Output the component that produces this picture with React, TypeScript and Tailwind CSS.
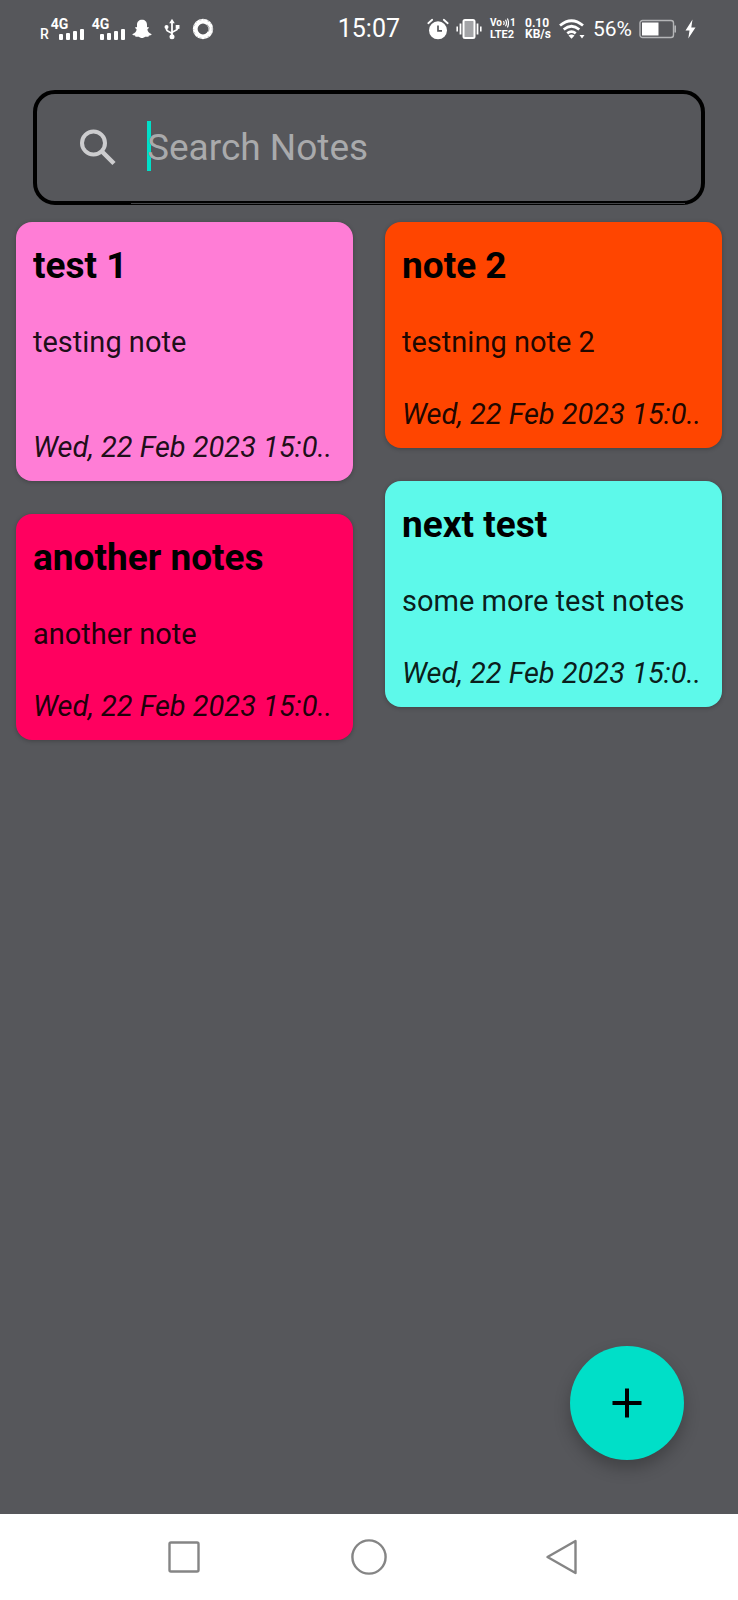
import React, { useState } from "react";

type Note = { title: string; body: string; date: string; color: string; bodyHeight: string };

const leftNotes: Note[] = [
  { title: "test 1", body: "testing note", date: "Wed, 22 Feb 2023 15:0..", color: "bg-[#ff7dd6]", bodyHeight: "h-[105px]" },
  { title: "another notes", body: "another note", date: "Wed, 22 Feb 2023 15:0..", color: "bg-[#ff005f]", bodyHeight: "h-[72px]" },
];

const rightNotes: Note[] = [
  { title: "note 2", body: "testning note 2", date: "Wed, 22 Feb 2023 15:0..", color: "bg-[#ff4500]", bodyHeight: "h-[72px]" },
  { title: "next test", body: "some more test notes", date: "Wed, 22 Feb 2023 15:0..", color: "bg-[#5df9ea]", bodyHeight: "h-[72px]" },
];

function Signal() {
  return (
    <div className="flex flex-col">
      <span className="text-[14px] leading-[10px] font-bold">4G</span>
      <div className="flex h-[11px] items-end gap-[3px] pl-2">
        <i className="h-[6px] w-1 rounded-[1px] bg-white" />
        <i className="h-[7px] w-1 rounded-[1px] bg-white" />
        <i className="h-[9px] w-1 rounded-[1px] bg-white" />
        <i className="h-[11px] w-1 rounded-[1px] bg-white" />
      </div>
    </div>
  );
}

function StatusBar() {
  return (
    <header className="flex h-[58px] items-center justify-between pr-[42px] pl-10 text-white">
      <div className="flex items-center">
        <span className="mr-[2px] self-end text-[14px] leading-[11px] font-medium">R</span>
        <Signal />
        <div className="w-2" />
        <Signal />
        <svg className="ml-[7px] h-[20px] w-[20px]" viewBox="0 0 20 20" fill="#fff">
          <path d="M10 .8c3 0 5 2 5 5v2.3c.5.3 1.500-.2 1.900.4.4.8-1.500 1.300-1.500 2 .2 1.900 1.800 3.700 3.900 4.400.5.2.3.8-.2 1-.8.400-2 .5-2.300.8-.2.500-.2 1-.7 1.100-1 .1-1.900-.4-2.900 0-1 .5-1.700 1.300-3.200 1.300s-2.200-.8-3.200-1.300c-1-.4-1.900.1-2.900 0-.5-.1-.5-.6-.7-1.100-.3-.300-1.500-.4-2.300-.8-.5-.2-.7-.8-.2-1 2.100-.7 3.700-2.500 3.900-4.400 0-.7-1.900-1.200-1.500-2 .4-.6 1.400-.1 1.900-.4V5.800c0-3 2-5 5-5z" />
        </svg>
        <svg className="ml-3 h-[22px] w-4" viewBox="0 0 16 22" fill="none" stroke="#fff" strokeWidth="1.800">
          <path d="M8 4v14M2.500 9v2.500c0 2.400 5.500 2.600 5.500 4.500M13.500 9v1.500c0 2.400-5.500 2.600-5.500 4.500" />
          <path d="M8 .8 10.800 5.200H5.200z" fill="#fff" stroke="none" />
          <circle cx="8" cy="18.800" r="2.500" fill="#fff" stroke="none" />
          <circle cx="2.500" cy="9" r="2" fill="#fff" stroke="none" />
          <path d="M11.700 7h3.800v3.800h-3.800z" fill="#fff" stroke="none" />
        </svg>
        <svg className="ml-3 h-[22px] w-[22px]" viewBox="0 0 22 22" fill="none">
          <circle cx="11" cy="11" r="7.800" stroke="#fff" strokeWidth="4.800" />
          <circle cx="11" cy="11" r="9.300" stroke="#b4b5b7" strokeWidth=".8" strokeDasharray="2 2 1 3" />
          <path d="M15 6.500a6 6 0 0 1 1.500 7" stroke="#999a9c" strokeWidth="1" />
        </svg>
      </div>
      <div className="flex items-center">
        <span className="mr-[27px] text-[25px] leading-7">15:07</span>
        <svg className="h-[22px] w-[22px]" viewBox="0 0 22 22" fill="none">
          <circle cx="11" cy="12.300" r="9" fill="#fff" />
          <path d="M1.300 5.200 5.200 1.800M20.700 5.200 16.800 1.800" stroke="#fff" strokeWidth="1.800" strokeLinecap="round" />
          <path d="M11 7.500v5.300h4" stroke="#56575b" strokeWidth="1.700" />
        </svg>
        <svg className="ml-[7px] h-[22px] w-[26px]" viewBox="0 0 26 22" fill="none" stroke="#fff">
          <rect x="7.500" y="2" width="11" height="18" rx="1.500" strokeWidth="2" fill="#a3a4a7" />
          <path d="M4.500 5.500v11M21.500 5.500v11" strokeWidth="1.800" />
          <path d="M1.200 8.500v5M24.800 8.500v5" strokeWidth="1.600" />
        </svg>
        <div className="ml-2 flex w-[28px] flex-col gap-px">
          <div className="flex h-[10px] items-center text-[10px] leading-[10px] font-bold">
            <span>Vo</span>
            <svg className="mx-px h-[10px] w-[6px]" viewBox="0 0 6 10" fill="none" stroke="#fff" strokeWidth="1.200">
              <path d="M.5 3q1.300 2 0 4M2.500 1.800q2 3.200 0 6.400M4.400.6q2.200 4.400 0 8.800" />
            </svg>
            <span>1</span>
          </div>
          <span className="text-[11px] leading-[11px] font-bold">LTE2</span>
        </div>
        <div className="ml-[7px] flex w-[26px] flex-col text-[12px] leading-[11px] font-bold">
          <span>0.10</span>
          <span>KB/s</span>
        </div>
        <svg className="ml-2 h-[20px] w-[26px]" viewBox="0 0 26 20" fill="none" stroke="#fff" strokeWidth="2.800">
          <path d="M1 6.500q11.500-9.500 23 0M4.700 10.500q7.800-6.400 15.600 0M8.300 14.300q4.200-3.400 8.400 0" />
          <path d="M9.500 16.500q3-2 6 0l-3 3.200zM20.500 16h5L23 19.500z" fill="#fff" stroke="none" />
        </svg>
        <span className="ml-2 text-[21px] leading-6">56%</span>
        <svg className="ml-[7px] h-[20px] w-[38px]" viewBox="0 0 38 20" fill="none">
          <rect x="1" y="1.500" width="33.500" height="17" rx="2.500" stroke="#b4b5b7" strokeWidth="1.400" />
          <path d="M3 3.500h16.500v13H3z" fill="#fff" />
          <path d="M36.200 6.500v7" stroke="#b4b5b7" strokeWidth="1.600" />
        </svg>
        <svg className="ml-2 h-[20px] w-[11px]" viewBox="0 0 11 20" fill="#fff">
          <path d="M7.500.5.500 11.500h4L3.300 19.500 10.500 8.500H6.300z" />
        </svg>
      </div>
    </header>
  );
}

function NoteCard({ note }: { note: Note }) {
  return (
    <article className={`rounded-[16px] px-[17px] pt-5 pb-[14px] shadow-[0_1px_4px_rgba(0,0,0,0.25)] ${note.color}`}>
      <h2 className="truncate text-[37px] leading-[48px] font-bold text-black">{note.title}</h2>
      <p className={`mt-8 text-[29px] leading-10 text-black/90 ${note.bodyHeight}`}>{note.body}</p>
      <p className="overflow-hidden text-[29px] leading-10 whitespace-nowrap text-black/90 italic">{note.date}</p>
    </article>
  );
}

export default function App() {
  const [query, setQuery] = useState("");
  return (
    <div className="flex min-h-screen flex-col bg-[#56575b] font-['Roboto',sans-serif]">
      <StatusBar />
      <main className="relative flex-1">
        <div className="px-[33px] pt-8">
          <label className="relative flex h-[115px] items-center rounded-[22px] border-4 border-black pl-[42px]">
            <svg className="h-[38px] w-[38px] shrink-0" viewBox="0 0 38 38" fill="none" stroke="#cdcdcf">
              <circle cx="14.500" cy="14" r="11.500" strokeWidth="4" />
              <path d="m23 22.500 12 12" strokeWidth="4.500" />
            </svg>
            <span className="mb-[3px] ml-[30px] h-[50px] w-1 bg-[#00dfc8]" />
            <input
              type="text"
              aria-label="Search Notes"
              placeholder="Search Notes"
              value={query}
              onChange={(e) => setQuery(e.target.value)}
              className="-ml-1 min-w-0 flex-1 bg-transparent text-[37px] leading-[48px] text-white caret-[#00dfc8] outline-none placeholder:text-[#a9aaac]"
            />
            <span className="absolute right-4 -bottom-[3px] left-[94px] h-px bg-[#434447]" />
          </label>
        </div>
        <section className="grid grid-cols-2 items-start gap-x-8 px-4 pt-[17px]">
          <div className="flex flex-col gap-[33px]">
            {leftNotes.map((n) => (
              <NoteCard key={n.title} note={n} />
            ))}
          </div>
          <div className="flex flex-col gap-[33px]">
            {rightNotes.map((n) => (
              <NoteCard key={n.title} note={n} />
            ))}
          </div>
        </section>
        <button
          type="button"
          aria-label="Add note"
          className="absolute right-[54px] bottom-[54px] flex h-[114px] w-[114px] items-center justify-center rounded-full bg-[#00dfc8] shadow-[0_8px_16px_rgba(0,0,0,0.25)]"
        >
          <svg className="h-[30px] w-[30px]" viewBox="0 0 30 30" stroke="#000" strokeWidth="4">
            <path d="M15 .5v29M.5 15h29" />
          </svg>
        </button>
      </main>
      <nav className="flex h-[86px] items-center justify-around bg-white px-[92px]">
        <button type="button" aria-label="Recent apps">
          <svg className="h-9 w-12" viewBox="0 0 48 36" fill="none" stroke="#858585" strokeWidth="2.400">
            <rect x="9.500" y="3.500" width="29" height="29" rx="1.500" />
          </svg>
        </button>
        <button type="button" aria-label="Home">
          <svg className="h-9 w-12" viewBox="0 0 48 36" fill="none" stroke="#858585" strokeWidth="2.400">
            <circle cx="24" cy="18" r="16.600" />
          </svg>
        </button>
        <button type="button" aria-label="Back">
          <svg className="h-9 w-12" viewBox="0 0 48 36" fill="none" stroke="#858585" strokeWidth="2.400" strokeLinejoin="round">
            <path d="M45.500 2v32L17.500 18z" />
          </svg>
        </button>
      </nav>
    </div>
  );
}
